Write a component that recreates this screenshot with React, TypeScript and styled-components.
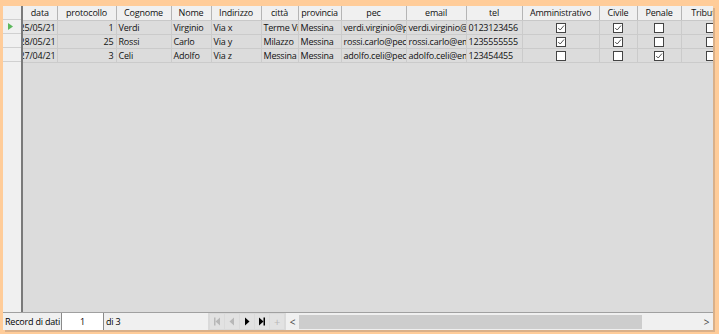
import React from "react";
import styled, { createGlobalStyle } from "styled-components";

const GlobalStyle = createGlobalStyle`
  html, body {
    margin: 0;
    padding: 0;
    background: #ffcc99;
    font-family: "Open Sans", "Noto Sans", sans-serif;
  }
`;

const Page = styled.div`
  width: 719px;
  height: 334px;
  box-sizing: border-box;
  padding: 6px 6px 4px 3px;
  display: flex;
`;

const Panel = styled.div`
  flex: 1;
  display: flex;
  flex-direction: column;
  background: #dcdcdc;
  box-shadow: 2px 2px 0 #d9b08a;
  overflow: hidden;
  font-size: 9px;
  letter-spacing: -0.2px;
`;

const GridArea = styled.div`
  flex: 1;
  display: flex;
  min-height: 0;
  overflow: hidden;
`;

const RowHeaders = styled.div`
  flex: none;
  width: 18px;
  background: #f0f0f0;
  border-right: 2px solid #7a7a7a;
  display: flex;
  flex-direction: column;
`;

const RowHead = styled.div`
  height: 14px;
  box-sizing: border-box;
  border-bottom: 1px solid #d0d0d0;
  display: flex;
  align-items: center;
  padding-left: 5px;
`;

const Table = styled.table<{ $w: number }>`
  flex: none;
  width: ${p => p.$w}px;
  border-collapse: collapse;
  table-layout: fixed;
  color: #111;
  align-self: flex-start;
  white-space: nowrap;
`;

const Th = styled.th<{ $w: number }>`
  box-sizing: border-box;
  width: ${p => p.$w}px;
  height: 14px;
  padding: 0 2px;
  font-weight: normal;
  background: #f0f0f0;
  border-right: 1px solid #b5b5b5;
  border-bottom: 1px solid #c8c8c8;
  overflow: hidden;
  text-align: center;
  line-height: 13px;
`;

const Td = styled.td<{ $align?: string }>`
  box-sizing: border-box;
  height: 14px;
  padding: 0 2px;
  background: #dcdcdc;
  border-right: 1px solid #cbcbcb;
  border-bottom: 1px solid #cbcbcb;
  overflow: hidden;
  text-overflow: clip;
  text-align: ${p => p.$align || "left"};
  line-height: 13px;
`;

const DateCell = styled(Td)`
  padding: 0 1px 0 0;
`;

const EndClip = styled.div`
  display: flex;
  justify-content: flex-end;
  overflow: hidden;
`;

const Box = styled.span`
  display: inline-block;
  width: 10px;
  height: 10px;
  box-sizing: border-box;
  border: 1px solid #444;
  background: #fff;
  vertical-align: middle;
  position: relative;
  svg {
    position: absolute;
    left: 0;
    top: 0;
  }
`;

const BottomBar = styled.div`
  flex: none;
  height: 17px;
  display: flex;
  align-items: stretch;
  background: #f0f0f0;
  border-top: 1px solid #a0a0a0;
  white-space: nowrap;
`;

const Label = styled.div<{ $w: number; $edge?: boolean }>`
  width: ${p => p.$w}px;
  display: flex;
  align-items: center;
  padding-left: 2px;
  box-sizing: border-box;
  border-right: ${p => (p.$edge ? "1px solid #8a8a8a" : "none")};
`;

const RecordInput = styled.div`
  width: 41px;
  background: #fff;
  display: flex;
  align-items: center;
  justify-content: center;
  border-right: 1px solid #8a8a8a;
`;

const Nav = styled.div`
  display: flex;
  margin-left: auto;
  background: #dadada;
  padding: 1px 2px;
  gap: 1px;
`;

const NavButton = styled.div<{ $off?: boolean }>`
  width: 14px;
  display: flex;
  align-items: center;
  justify-content: center;
  background: #e2e2e2;
  color: ${p => (p.$off ? "#b8b8b8" : "#000")};
  font-size: 11px;
`;

const Scroll = styled.div`
  width: 427px;
  display: flex;
  align-items: center;
  background: #f0f0f0;
`;

const Arrow = styled.div`
  width: 13px;
  display: flex;
  justify-content: center;
  color: #444;
  font-size: 10px;
`;

const Thumb = styled.div`
  width: 343px;
  height: 14px;
  background: #cdcdcd;
`;

const Track = styled.div`
  flex: 1;
`;

const columns = [
  { key: "data", label: "data", w: 34 },
  { key: "prot", label: "protocollo", w: 59 },
  { key: "cog", label: "Cognome", w: 55 },
  { key: "nome", label: "Nome", w: 40 },
  { key: "ind", label: "Indirizzo", w: 50 },
  { key: "citta", label: "città", w: 37 },
  { key: "prov", label: "provincia", w: 43 },
  { key: "pec", label: "pec", w: 65 },
  { key: "email", label: "email", w: 60 },
  { key: "tel", label: "tel", w: 56 },
  { key: "amm", label: "Amministrativo", w: 77 },
  { key: "civ", label: "Civile", w: 38 },
  { key: "pen", label: "Penale", w: 44 },
  { key: "trib", label: "Tributario", w: 60 },
];

const tableWidth = columns.reduce((s, c) => s + c.w, 0);

const rows = [
  { data: "25/05/21", prot: "1", cog: "Verdi", nome: "Virginio", ind: "Via x", citta: "Terme Vigliatore", prov: "Messina", pec: "verdi.virginio@pec.it", email: "verdi.virginio@email.it", tel: "0123123456", amm: true, civ: true, pen: false, trib: false },
  { data: "28/05/21", prot: "25", cog: "Rossi", nome: "Carlo", ind: "Via y", citta: "Milazzo", prov: "Messina", pec: "rossi.carlo@pec.it", email: "rossi.carlo@email.it", tel: "1235555555", amm: true, civ: true, pen: false, trib: false },
  { data: "27/04/21", prot: "3", cog: "Celi", nome: "Adolfo", ind: "Via z", citta: "Messina", prov: "Messina", pec: "adolfo.celi@pec.it", email: "adolfo.celi@email.it", tel: "123454455", amm: false, civ: false, pen: true, trib: false },
];

const Check = ({ on }: { on: boolean }) => (
  <Box>
    {on && (
      <svg width="8" height="8" viewBox="0 0 8 8">
        <path d="M1.2 4 L3.2 6 L7 1.5" stroke="#555" strokeWidth="1" fill="none" />
      </svg>
    )}
  </Box>
);

const NavIcon = ({ kind }: { kind: "first" | "prev" | "next" | "last" }) => (
  <svg width="8" height="9" viewBox="0 0 8 9" fill="currentColor">
    {kind === "first" && (
      <>
        <rect x="1" y="0.5" width="1.5" height="8" />
        <path d="M7 0.5 L2.5 4.5 L7 8.5 Z" />
      </>
    )}
    {kind === "prev" && <path d="M6 0.5 L1.5 4.5 L6 8.5 Z" />}
    {kind === "next" && <path d="M2 0.5 L6.5 4.5 L2 8.5 Z" />}
    {kind === "last" && (
      <>
        <path d="M1 0.5 L5.5 4.5 L1 8.5 Z" />
        <rect x="5.5" y="0.5" width="1.5" height="8" />
      </>
    )}
  </svg>
);

const RowMarker = () => (
  <svg width="5" height="7" viewBox="0 0 5 7">
    <path d="M0 0 L5 3.5 L0 7 Z" fill="#5cb85c" />
  </svg>
);

export default function App() {
  return (
    <>
      <GlobalStyle />
      <Page>
        <Panel>
          <GridArea>
            <RowHeaders>
              <RowHead />
              <RowHead><RowMarker /></RowHead>
              <RowHead />
              <RowHead />
            </RowHeaders>
            <Table $w={tableWidth}>
              <thead>
                <tr>
                  {columns.map(c => (
                    <Th key={c.key} $w={c.w}>{c.label}</Th>
                  ))}
                </tr>
              </thead>
              <tbody>
                {rows.map((r, i) => (
                  <tr key={i}>
                    <DateCell><EndClip><span>{r.data}</span></EndClip></DateCell>
                    <Td $align="right">{r.prot}</Td>
                    <Td>{r.cog}</Td>
                    <Td>{r.nome}</Td>
                    <Td>{r.ind}</Td>
                    <Td>{r.citta}</Td>
                    <Td>{r.prov}</Td>
                    <Td>{r.pec}</Td>
                    <Td>{r.email}</Td>
                    <Td>{r.tel}</Td>
                    <Td $align="center"><Check on={r.amm} /></Td>
                    <Td $align="center"><Check on={r.civ} /></Td>
                    <Td $align="center"><Check on={r.pen} /></Td>
                    <Td $align="center"><Check on={r.trib} /></Td>
                  </tr>
                ))}
              </tbody>
            </Table>
          </GridArea>
          <BottomBar>
            <Label $w={59} $edge>Record di dati</Label>
            <RecordInput>1</RecordInput>
            <Label $w={100}>di 3</Label>
            <Nav>
              <NavButton $off><NavIcon kind="first" /></NavButton>
              <NavButton $off><NavIcon kind="prev" /></NavButton>
              <NavButton><NavIcon kind="next" /></NavButton>
              <NavButton><NavIcon kind="last" /></NavButton>
              <NavButton $off>+</NavButton>
            </Nav>
            <Scroll>
              <Arrow>&lt;</Arrow>
              <Thumb />
              <Track />
              <Arrow>&gt;</Arrow>
            </Scroll>
          </BottomBar>
        </Panel>
      </Page>
    </>
  );
}
